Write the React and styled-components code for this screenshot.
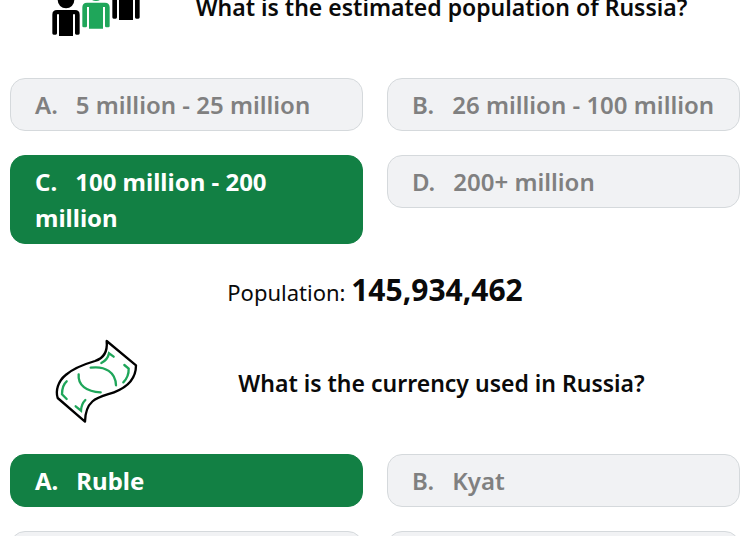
import React from 'react'
import styled, { createGlobalStyle } from 'styled-components'

const GlobalStyle = createGlobalStyle`
  * { box-sizing: border-box; }
  body {
    margin: 0;
    background: #fff;
    color: #0a0a0a;
    font-family: "Segoe UI", "Noto Sans", "Open Sans", sans-serif;
    overflow-x: hidden;
  }
`

// the page is scrolled a little past the top of the first question
const Page = styled.main`
  margin-top: -40px;
  padding: 0 10px 24px;
`

const QuestionHeader = styled.header`
  display: flex;
  align-items: center;
  padding-left: 39px;
  margin-bottom: 24px;
`

const Icon = styled.svg`
  flex: none;
  display: block;
  width: 94px;
  height: 94px;
`

const Title = styled.h2`
  flex: 1;
  margin: 0;
  font-size: 23px;
  line-height: 36px;
  font-weight: 600;
  text-align: center;
`

const Answers = styled.div`
  display: grid;
  grid-template-columns: 1fr 1fr;
  align-items: start;
  gap: 24px;
`

const Answer = styled.button`
  min-width: 0;
  padding: 8px 16px 7px 24px;
  border: 1px solid ${p => (p.$correct ? '#128044' : '#d5d9dc')};
  border-radius: 15px;
  background: ${p => (p.$correct ? '#128044' : '#f1f2f4')};
  color: ${p => (p.$correct ? '#fff' : '#808080')};
  font-family: inherit;
  font-size: 24px;
  line-height: 36px;
  font-weight: ${p => (p.$correct ? 700 : 600)};
  text-align: left;
  cursor: pointer;
`

const Letter = styled.span`
  margin-right: 18px;
`

const Fact = styled.p`
  margin: 26px 0 22px;
  font-size: 22px;
  line-height: 44px;
  font-weight: 400;
  text-align: center;

  strong {
    font-size: 30px;
    line-height: 36px;
    font-weight: 700;
  }
`

function Person({ x, y, color }) {
  return (
    <g transform={`translate(${x} ${y})`} fill={color}>
      <circle cx="41" cy="-30" r="25" />
      <path d="M14 0H68Q82 0 82 14V70Q82 74 78 74H72Q68 74 68 70V13H62V78H20V13H14V70Q14 74 10 74H4Q0 74 0 70V14Q0 0 14 0Z" />
    </g>
  )
}

function PeopleIcon() {
  return (
    <Icon viewBox="27 -120 282 282" aria-hidden="true">
      <Person x={37} y={30} color="#000" />
      <Person x={127} y={8} color="#1fa65a" />
      <Person x={217} y={-18} color="#000" />
    </Icon>
  )
}

function MoneyIcon() {
  return (
    <Icon viewBox="27 18 282 282" fill="none" strokeWidth="7" aria-hidden="true">
      <path
        stroke="#000"
        strokeLinejoin="round"
        d="M200 33L288 106C288 146 265 171 222 187C182 201 136 203 135 275L53 204C46 182 54 154 77 135C101 114 131 103 165 93C190 85 203 64 200 33Z"
      />
      <g stroke="#1fa65a" strokeLinecap="round">
        <path d="M152 113C196 107 227 127 228 166" />
        <path d="M116 133C113 165 139 185 182 187" />
        <path d="M184 99Q203 90 207 70L221 80" />
        <path d="M253 105L266 116Q267 140 250 157" />
        <path d="M80 154Q66 166 66 193L80 207" />
        <path d="M136 210Q124 222 123 242L107 229" />
      </g>
    </Icon>
  )
}

const questions = [
  {
    title: 'What is the estimated population of Russia?',
    icon: <PeopleIcon />,
    answers: ['5 million - 25 million', '26 million - 100 million', '100 million - 200 million', '200+ million'],
    correct: 2,
    fact: { label: 'Population:', value: '145,934,462' },
  },
  {
    title: 'What is the currency used in Russia?',
    icon: <MoneyIcon />,
    answers: ['Ruble', 'Kyat', '', ''],
    correct: 0,
  },
]

function Question({ title, icon, answers, correct, fact }) {
  return (
    <section>
      <QuestionHeader>
        {icon}
        <Title>{title}</Title>
      </QuestionHeader>
      <Answers>
        {answers.map((answer, i) => (
          <Answer key={i} type="button" $correct={i === correct}>
            <Letter>{'ABCD'[i]}.</Letter>
            {answer}
          </Answer>
        ))}
      </Answers>
      {fact && (
        <Fact>
          {fact.label} <strong>{fact.value}</strong>
        </Fact>
      )}
    </section>
  )
}

export default function App() {
  return (
    <>
      <GlobalStyle />
      <Page>
        {questions.map(q => (
          <Question key={q.title} {...q} />
        ))}
      </Page>
    </>
  )
}
